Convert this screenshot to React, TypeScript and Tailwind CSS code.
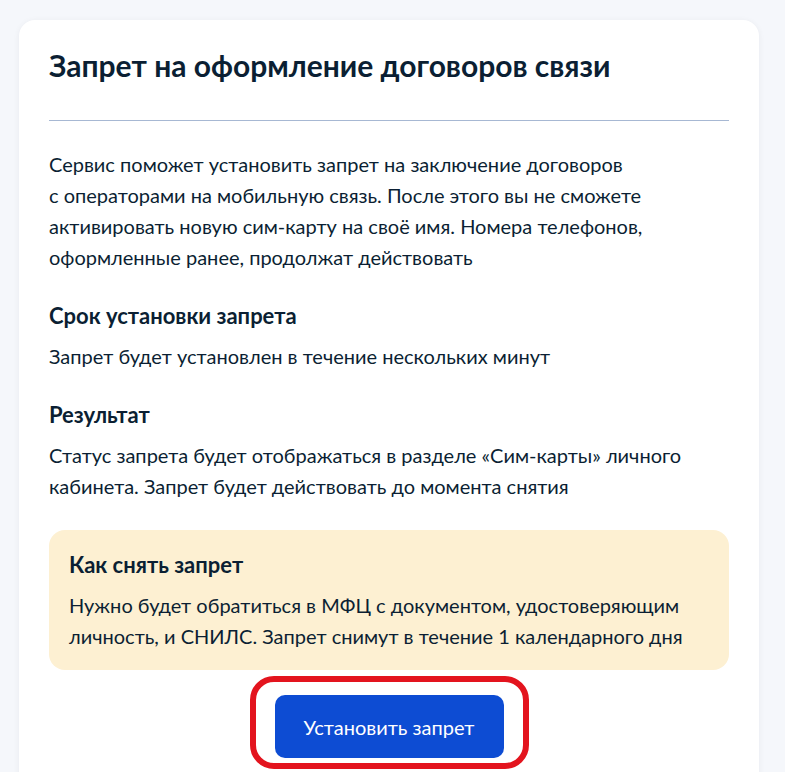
import React from "react";

const sections = [
  {
    title: "Срок установки запрета",
    text: ["Запрет будет установлен в течение нескольких минут"],
  },
  {
    title: "Результат",
    text: [
      "Статус запрета будет отображаться в разделе «Сим-карты» личного",
      "кабинета. Запрет будет действовать до момента снятия",
    ],
  },
];

export default function App() {
  return (
    <div
      className="min-h-[772px] bg-[#f5f7fb] px-[19px] pt-[20px] text-[#0b1f33]"
      style={{ fontFamily: "Lato, 'Noto Sans', sans-serif" }}
    >
      <div className="w-[740px] rounded-t-[16px] bg-white px-[30px] pt-[27px] pb-[20px] shadow-[0_1px_6px_rgba(11,31,51,0.06)]">
        <h1 className="text-[30px] font-bold leading-[36px]">
          Запрет на оформление договоров связи
        </h1>
        <div className="mt-[37px] h-px bg-[#a7b8d3]" />

        <p className="mt-[28px] text-[20px] leading-[31px]">
          Сервис поможет установить запрет на заключение договоров
          <br />
          с операторами на мобильную связь. После этого вы не сможете
          <br />
          активировать новую сим-карту на своё имя. Номера телефонов,
          <br />
          оформленные ранее, продолжат действовать
        </p>

        {sections.map((s) => (
          <div key={s.title} className="mt-[28px]">
            <h2 className="text-[22px] font-bold leading-[30px]">{s.title}</h2>
            <p className="mt-[10px] text-[20px] leading-[31px]">
              {s.text.map((line, i) => (
                <React.Fragment key={i}>
                  {i > 0 && <br />}
                  {line}
                </React.Fragment>
              ))}
            </p>
          </div>
        ))}

        <div className="mt-[28px] rounded-[16px] bg-[#fdf0d2] px-[20px] pt-[20px] pb-[18px]">
          <h3 className="text-[22px] font-bold leading-[30px]">Как снять запрет</h3>
          <p className="mt-[10px] text-[20px] leading-[31px]">
            Нужно будет обратиться в МФЦ с документом, удостоверяющим
            <br />
            личность, и СНИЛС. Запрет снимут в течение 1 календарного дня
          </p>
        </div>

        <div className="mt-[6px] flex justify-center">
          <div className="rounded-[24px] border-[6px] border-[#e3141e] px-[19px] pt-[13px] pb-[5px]">
            <button className="h-[63px] w-[229px] rounded-[10px] bg-[#0d4cd3] text-[20px] text-white">
              Установить запрет
            </button>
          </div>
        </div>
      </div>
    </div>
  );
}
